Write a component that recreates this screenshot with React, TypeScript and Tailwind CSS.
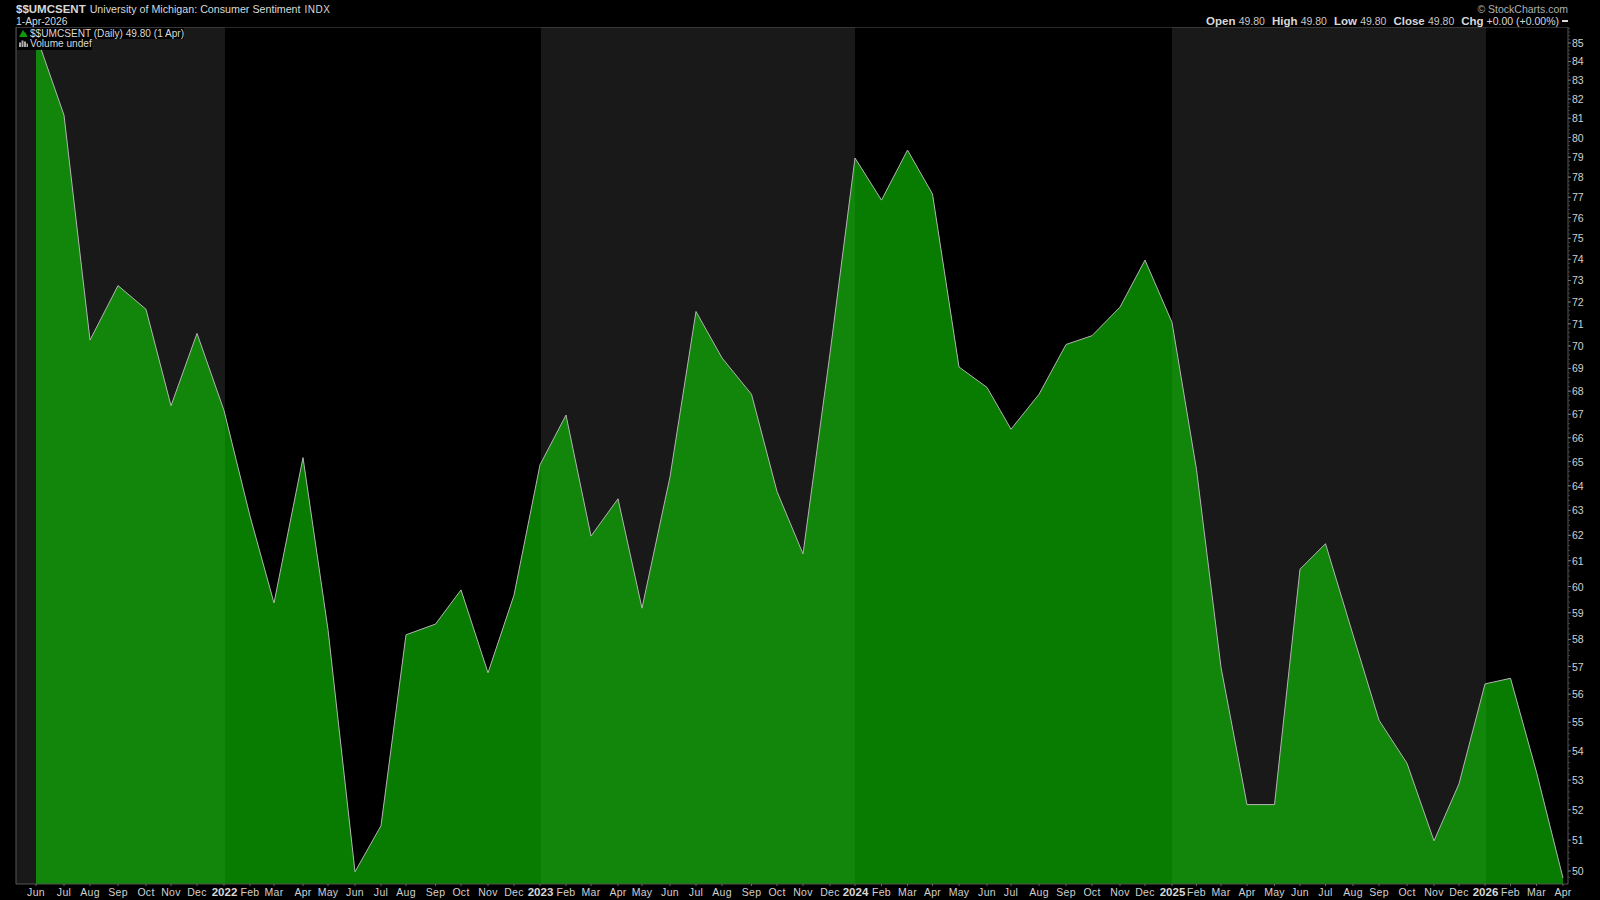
const months: [string, number, number][] = [
  ['Jun', 36, 85.5], ['Jul', 64, 81.2], ['Aug', 90, 70.3], ['Sep', 118, 72.8], ['Oct', 146, 71.7], ['Nov', 171, 67.4], ['Dec', 197, 70.6],
  ['2022', 224, 67.2], ['Feb', 250, 62.8], ['Mar', 274, 59.4], ['Apr', 303, 65.2], ['May', 328, 58.4], ['Jun', 355, 50.0], ['Jul', 381, 51.5], ['Aug', 406, 58.2], ['Sep', 435.5, 58.6], ['Oct', 461, 59.9], ['Nov', 488, 56.8], ['Dec', 514, 59.7],
  ['2023', 540, 64.9], ['Feb', 566, 67.0], ['Mar', 591, 62.0], ['Apr', 618, 63.5], ['May', 642, 59.2], ['Jun', 670, 64.4], ['Jul', 696, 71.6], ['Aug', 722, 69.5], ['Sep', 751.5, 67.9], ['Oct', 777, 63.8], ['Nov', 803, 61.3], ['Dec', 830, 69.7],
  ['2024', 855, 79.0], ['Feb', 881.5, 76.9], ['Mar', 907.5, 79.4], ['Apr', 932.5, 77.2], ['May', 959, 69.1], ['Jun', 987, 68.2], ['Jul', 1011, 66.4], ['Aug', 1039, 67.9], ['Sep', 1066, 70.1], ['Oct', 1092, 70.5], ['Nov', 1120, 71.8], ['Dec', 1145, 74.0],
  ['2025', 1172, 71.1], ['Feb', 1196.5, 64.7], ['Mar', 1221, 57.0], ['Apr', 1247, 52.2], ['May', 1274.5, 52.2], ['Jun', 1300, 60.7], ['Jul', 1325.5, 61.7], ['Aug', 1353, 58.2], ['Sep', 1379, 55.1], ['Oct', 1407, 53.6], ['Nov', 1434, 51.0], ['Dec', 1459, 52.9],
  ['2026', 1485, 56.4], ['Feb', 1510.5, 56.6], ['Mar', 1536.5, 53.3], ['Apr', 1563, 49.8],
];

const TOP = 27;
const BOTTOM = 884;
const LEFT = 16;
const RIGHT = 1568;

// log scale, 85 sits at y=43 and 50 at y=871
const yFor = (v: number) => 43 + ((Math.log(85) - Math.log(v)) / (Math.log(85) - Math.log(50))) * 828;

const bands = [
  [LEFT, 225],
  [541, 855],
  [1172, 1486],
];

const line = months.map((m) => `${m[1]},${(yFor(m[2]) + 0.8).toFixed(1)}`).join(' ');
const area = `36,${BOTTOM} ${line} 1563,${BOTTOM}`;

const levels: number[] = [];
for (let v = 50; v <= 85; v++) levels.push(v);

const minor: number[] = [];
for (let v = 49.8; v < 86; v += 0.2) minor.push(v);

function Stat({ label, value }: { label: string; value: string }) {
  return (
    <span className="ml-[7px]">
      <span className="font-bold">{label}</span> <span className="text-[#c8c8c8] text-[10.5px]">{value}</span>
    </span>
  );
}

export default function App() {
  return (
    <div className="w-[1600px] h-[900px] bg-black overflow-hidden text-[#d8d8d8] font-['Liberation_Sans',Arial,sans-serif]">
      <div className="h-[27px] pl-4 pr-8 flex justify-between leading-none">
        <div>
          <div className="flex items-baseline h-[16px] pt-[4px]">
            <span className="font-bold text-[11.5px]">$$UMCSENT</span>
            <span className="ml-[4px] text-[10.7px]">University of Michigan: Consumer Sentiment</span>
            <span className="ml-[4px] text-[10px] tracking-[0.5px]">INDX</span>
          </div>
          <div className="text-[10.3px] mt-[1px]">1-Apr-2026</div>
        </div>
        <div className="flex flex-col items-end">
          <div className="h-[15px] pt-[4px] text-[10.5px] text-[#b0b0b0]">© StockCharts.com</div>
          <div className="text-[11.5px] flex items-baseline mt-[1px]">
            <Stat label="Open" value="49.80" />
            <Stat label="High" value="49.80" />
            <Stat label="Low" value="49.80" />
            <Stat label="Close" value="49.80" />
            <span className="ml-[7px] font-bold">Chg</span>
            <span className="ml-[3px] text-[10.5px]">+0.00 (+0.00%)</span>
            <span className="ml-[3px] w-[6px] h-[2px] bg-[#d8d8d8] self-center" />
          </div>
        </div>
      </div>

      <svg className="block" width={1600} height={873} viewBox="0 27 1600 873" fontFamily="'Liberation Sans', Arial, sans-serif">
        {bands.map((b) => (
          <rect key={b[0]} x={b[0]} y={TOP} width={b[1] - b[0]} height={BOTTOM - TOP} fill="#191919" />
        ))}
        <polygon points={area} fill="#0ccf00" fillOpacity={0.6} />
        <polyline points={line} fill="none" stroke="#b4b4b4" strokeWidth={1} />
        <path d={`M${LEFT} ${BOTTOM}V${TOP}H${RIGHT}V${BOTTOM}H${LEFT}`} fill="none" stroke="#555" strokeWidth={1} />

        {/* legend */}
        <rect x={17} y={28} width={167} height={11} fill="#000" />
        <rect x={17} y={39} width={75} height={11} fill="#000" />
        <path d="M19 37L21.5 32.5L23 30L24.5 32.5L25.5 32.5L27.5 37Z" fill="#0f9a0a" />
        <path d="M19 47V42.5H21V47ZM21.5 47V40.5H23.5V47ZM24 47V41.5H26V47ZM26.5 47V43.5H28V47Z" fill="#aaa" />
        <text x={30} y={37} fontSize={10.1} fill="#d8d8d8">$$UMCSENT (Daily) 49.80 (1 Apr)</text>
        <text x={30} y={47} fontSize={10.1} fill="#d8d8d8">Volume undef</text>

        {/* right axis */}
        {minor.map((v) => (
          <line key={v} x1={RIGHT} x2={RIGHT + 2} y1={yFor(v)} y2={yFor(v)} stroke="#444" />
        ))}
        {levels.map((v) => (
          <g key={v}>
            <line x1={RIGHT} x2={RIGHT + 3} y1={yFor(v)} y2={yFor(v)} stroke="#777" />
            <text x={1572} y={yFor(v) + 4} fontSize={10.5} fill="#d0d0d0">{v}</text>
          </g>
        ))}

        {/* bottom axis */}
        {months.map((m, i) => {
          const isYear = m[0].length === 4;
          return (
            <g key={i}>
              <line x1={m[1]} x2={m[1]} y1={BOTTOM} y2={BOTTOM + 2} stroke="#666" />
              <text
                x={isYear ? m[1] + 0.5 : m[1]}
                y={896}
                textAnchor="middle"
                fontSize={isYear ? 11.5 : 10.5}
                fontWeight={isYear ? 700 : 400}
                letterSpacing={isYear ? 0 : 0.3}
                fill={isYear ? '#d8d8d8' : '#d0d0d0'}
              >
                {m[0]}
              </text>
            </g>
          );
        })}
      </svg>
    </div>
  );
}
